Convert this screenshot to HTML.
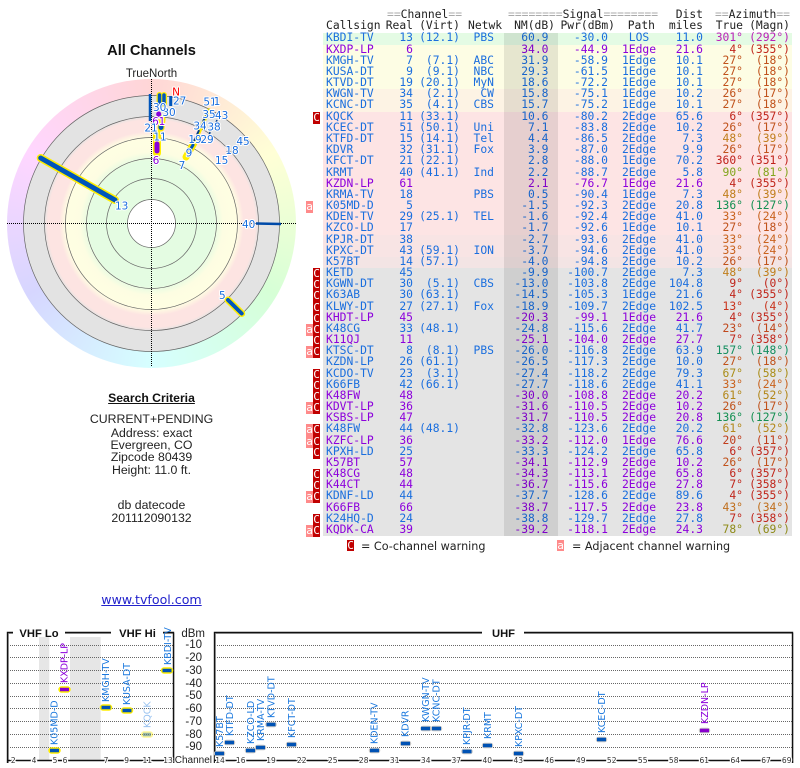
<!DOCTYPE html>
<html><head><meta charset="utf-8"><style>
html,body{margin:0;padding:0;background:#fff;width:800px;height:768px;overflow:hidden}
body{position:relative;font-family:"Liberation Sans",sans-serif;color:#222}
svg{position:absolute;left:0;top:0}
.c{position:absolute;left:0;width:303px;text-align:center;white-space:nowrap}
#ring{position:absolute;left:7px;top:79px;width:289px;height:289px;border-radius:50%;background:conic-gradient(hsl(0,100%,92%),hsl(30,100%,92%),hsl(60,100%,92%),hsl(90,100%,92%),hsl(120,100%,92%),hsl(150,100%,92%),hsl(180,100%,92%),hsl(210,100%,92%),hsl(240,100%,92%),hsl(270,100%,92%),hsl(300,100%,92%),hsl(330,100%,92%),hsl(360,100%,92%))}
.mono{font-family:"DejaVu Sans Mono",monospace;font-size:11.33px;line-height:12px}
.hd{position:absolute;top:0;left:0;width:800px;height:30px;color:#222}
.hd span{position:absolute;white-space:pre}
.hd em{font-style:normal;color:#aaa}
.r{position:absolute;left:323px;width:469px;height:11px;border-bottom:1px solid rgba(0,0,0,.17);color:#1a6ede}
.r.t{height:12px}
.r span{position:absolute;top:-2px;white-space:pre}
.r i{font-style:normal}
.P{color:#8c00dc}
.n{left:3px}.a{right:379px}.v{right:332px}.w{right:298px}.m{right:243.5px}.d{right:184px}
.h{left:286px;width:60px;text-align:center}.l{right:89px}.y{right:49px}.g{right:2px}
.bg{background:#e4fbe4}.by{background:#fdfde4}.bo{background:#fdf3e4}.bp{background:#fde4e4}.bq{background:#f8e4e4}.bs{background:#f3e4e4}.bk{background:#e4e4e4}
u{position:absolute;text-decoration:none;width:7px;height:12px;top:0;color:#fff;text-align:center;font:11px/11px "DejaVu Sans Mono",monospace}
u.C{left:-10px;background:#c00000}
u.A{left:-17px;background:#ff8a8a}
#nm{position:absolute;left:504px;top:33px;width:54px;height:503px;background:rgba(0,0,0,.09)}
a{color:#2222cc}
</style></head><body>
<div id="ring"></div>

<div class="c" style="top:43px;font-weight:bold;font-size:14.67px;line-height:17px;color:#111">All Channels</div>
<div class="c" style="top:68px;font-size:11.5px;line-height:13px">TrueNorth</div>

<svg width="800" height="768" viewBox="0 0 800 768">
<defs><radialGradient id="rg" gradientUnits="userSpaceOnUse" cx="151.5" cy="223.5" r="128">
<stop offset="0" stop-color="#e4fce2"/><stop offset=".49" stop-color="#e4fce2"/><stop offset=".56" stop-color="#fdfde2"/><stop offset=".67" stop-color="#fffee2"/><stop offset=".72" stop-color="#fde4e2"/><stop offset=".81" stop-color="#fde4e2"/><stop offset=".84" stop-color="#e3e3e3"/><stop offset="1" stop-color="#e3e3e3"/>
</radialGradient></defs>
<circle cx="151.5" cy="223.5" r="128" fill="url(#rg)" stroke="#666" stroke-width=".7"/>
<g fill="none" stroke="#666" stroke-width=".7">
<circle cx="151.5" cy="223.5" r="107"/><circle cx="151.5" cy="223.5" r="86"/><circle cx="151.5" cy="223.5" r="65"/><circle cx="151.5" cy="223.5" r="45"/></g>
<circle cx="151.5" cy="223.5" r="24" fill="#fff" stroke="#666" stroke-width=".7"/>
<g stroke="#000" stroke-width="1" stroke-dasharray="1 1"><line x1="7" y1="223.5" x2="296" y2="223.5"/><line x1="151.5" y1="79" x2="151.5" y2="367"/></g>
<g fill="none" stroke-linecap="round">
<g stroke="#ffee00"><path stroke-width="8" d="M40.7 158L115 200"/><path stroke-width="7" d="M228 300L241.7 313.5"/><path stroke-width="8" d="M157 134V153"/><path stroke-width="6" d="M159.5 95V103M164 95V104"/><path stroke-width="7" d="M162 119L161 128"/><path stroke-width="7" d="M186 157L194 143"/><path stroke-width="3.5" d="M197 137L209 110"/></g>
<g stroke="#0055bb"><path stroke-width="5" d="M40.7 158L115 200"/><path stroke-width="4" d="M228 300L241.7 313.5"/><path stroke-width="3.5" d="M159.5 95V103M164 95V104"/><path stroke-width="5" d="M161 126.5V127.5"/><path stroke-width="3" d="M190 150L193 145"/></g>
<path stroke="#8800dd" stroke-width="5" d="M157 144V151"/><path stroke="#8800dd" stroke-width="5" d="M158.7 114V114.2"/>
</g>
<g fill="none" stroke="#0055bb"><path stroke-width="2.5" d="M150 94V121"/><path stroke-width="3" d="M170.7 96V106"/><path stroke="#004aa8" stroke-width="2.5" d="M256 223.5L281 224"/><path stroke="#003e90" stroke-width="2" stroke-dasharray="5 2" d="M194 141L209 109"/><path stroke="#003e90" stroke-width="1.5" d="M217 120L215 125M210 132L209 136M239 140L237 143M229 150L227 152"/></g>
<g font-family="'DejaVu Sans',sans-serif" font-size="10.5" text-anchor="middle" fill="#1a6ede" stroke="#fff" stroke-width="2" paint-order="stroke" stroke-linejoin="round">
<text x="179.7" y="104.5">27</text><text x="169" y="116">30</text><text x="159.7" y="111">30</text>
<text x="155.5" y="125" fill="#8c00dc">6</text><text x="162" y="125" fill="#8c00dc">1</text>
<text x="151" y="131.5">21</text><text x="160" y="140.5">11</text><text x="156" y="164" fill="#8c00dc">6</text>
<text x="182" y="169">7</text><text x="189" y="156.5">9</text><text x="195" y="143">19</text><text x="207" y="143">29</text><text x="200" y="129.5">34</text><text x="209" y="118">35</text><text x="214" y="130.5">38</text><text x="221.7" y="119">43</text><text x="210" y="105.5">51</text><text x="217" y="105">1</text><text x="221.7" y="164">15</text><text x="232" y="154">18</text><text x="243" y="145">45</text><text x="121.7" y="209.5">13</text><text x="248.7" y="228">40</text><text x="222.3" y="299">5</text>
<text x="176" y="95.5" fill="#ff0000">N</text></g>

<!-- chart -->
<g fill="#e6e6e6"><rect x="39" y="637" width="10.3" height="123"/><rect x="70" y="637" width="30.7" height="123"/></g>
<g stroke="#666" stroke-width="1" stroke-dasharray="1 1">
<path d="M8 645.5H173M8 657.5H173M8 670.5H173M8 683.5H173M8 696.5H173M8 708.5H173M8 721.5H173M8 734.5H173M8 747.5H173"/>
<path d="M215 645.5H792M215 657.5H792M215 670.5H792M215 683.5H792M215 696.5H792M215 708.5H792M215 721.5H792M215 734.5H792M215 747.5H792"/></g>
<g fill="none" stroke="#aaa" stroke-width="1"><path d="M8.5 633.5H13M65 633.5H111M163 633.5H174V763M8.5 633.5V763M215.5 633.5H482M524 633.5H793V763M215.5 633.5V763"/></g>
<g fill="none" stroke="#111" stroke-width="1.4"><path d="M7.5 763V632.5H13M65 632.5H111M163 632.5H173.5V763M214.5 763V632.5H482M524 632.5H792.5V763"/><path d="M7.5 760.5H173.5M214.5 760.5H792.5"/></g>
<g font-family="'Liberation Sans',sans-serif" font-weight="bold" font-size="11.2" fill="#111" text-anchor="middle"><text x="39" y="637">VHF Lo</text><text x="137.5" y="637">VHF Hi</text><text x="503.5" y="637">UHF</text></g>
<g font-family="'Liberation Sans',sans-serif" font-size="11.5" fill="#222" text-anchor="end"><text x="205" y="637">dBm</text><text x="202" y="648">-10</text><text x="202" y="661">-20</text><text x="202" y="674">-30</text><text x="202" y="687">-40</text><text x="202" y="699">-50</text><text x="202" y="712">-60</text><text x="202" y="725">-70</text><text x="202" y="738">-80</text><text x="202" y="750">-90</text><text x="212" y="763" font-size="10">Channel</text></g>
<g font-family="'DejaVu Sans',sans-serif" font-size="7.5" fill="#333" text-anchor="middle" stroke="#fff" stroke-width="2.5" paint-order="stroke">
<text x="13.3" y="763">2</text><text x="34" y="763">4</text><text x="55" y="763">5</text><text x="65" y="763">6</text><text x="106" y="763">7</text><text x="126.7" y="763">9</text><text x="147.3" y="763">11</text><text x="168" y="763">13</text><text x="220" y="763">14</text><text x="240.7" y="763">16</text><text x="271" y="763">19</text><text x="301.7" y="763">22</text><text x="332.7" y="763">25</text><text x="363.7" y="763">28</text><text x="394.7" y="763">31</text><text x="425.7" y="763">34</text><text x="456.3" y="763">37</text><text x="487.3" y="763">40</text><text x="518.3" y="763">43</text><text x="549.3" y="763">46</text><text x="580.7" y="763">49</text><text x="611.7" y="763">52</text><text x="642.7" y="763">55</text><text x="673.7" y="763">58</text><text x="704.3" y="763">61</text><text x="735.3" y="763">64</text><text x="766" y="763">67</text><text x="786.7" y="763">69</text></g>
<!-- markers -->
<g fill="none">
<g stroke="#ffee00" stroke-width="6.5" stroke-linecap="round"><path d="M51.5 750.5H57.5M61.5 689.5H67.5M103 707.5H109M124 710.5H130M164 670.5H170"/><path opacity=".4" d="M144 734.5H150"/></g>
<g stroke="#c4c4c4" stroke-width="5.5" stroke-linecap="round"><path d="M216.5 753.5H222.5M226.5 742.5H232.5M247.5 750.5H253.5M257.5 747.5H263.5M268 724.5H274M288.5 744.5H294.5M371.5 750.5H377.5M402.5 743.5H408.5M423 728.5H429M433.5 728.5H439.5M464 751.5H470M484.5 745.5H490.5M515.5 753.5H521.5M598.5 739.5H604.5M701.5 730.5H707.5"/></g>
<g stroke="#0052b4" stroke-width="3.5"><path d="M50 750.5H59M101.5 707.5H110.5M122.5 710.5H131.5M162.5 670.5H171.5M215 753.5H224M225 742.5H234M246 750.5H255M256 747.5H265M266.5 724.5H275.5M287 744.5H296M370 750.5H379M401 743.5H410M421 728.5H430M432 728.5H441M462.5 751.5H471.5M483 745.5H492M514 753.5H523M597 739.5H606"/><path opacity=".4" d="M143 734.5H151"/></g>
<path stroke="#8800cc" stroke-width="3.5" d="M60 689.5H69M700 730.5H709"/>
</g>
<g font-family="'DejaVu Sans',sans-serif" font-size="9.5" fill="#1a78de">
<text transform="translate(57.5,745) rotate(-90)">K05MD-D</text>
<text transform="translate(67.5,683) rotate(-90)" fill="#8c00dc">KXDP-LP</text>
<text transform="translate(109,702) rotate(-90)">KMGH-TV</text>
<text transform="translate(130,705) rotate(-90)">KUSA-DT</text>
<text transform="translate(150.5,728) rotate(-90)" opacity=".45">KQCK</text>
<text transform="translate(171,665) rotate(-90)">KBDI-TV</text>
<text transform="translate(223,747) rotate(-90)">K57BT</text>
<text transform="translate(233,736) rotate(-90)">KTFD-DT</text>
<text transform="translate(254,744) rotate(-90)">KZCO-LD</text>
<text transform="translate(264,741) rotate(-90)">KRMA-TV</text>
<text transform="translate(274.5,718) rotate(-90)">KTVD-DT</text>
<text transform="translate(295,738) rotate(-90)">KFCT-DT</text>
<text transform="translate(377.5,744) rotate(-90)">KDEN-TV</text>
<text transform="translate(408.5,737) rotate(-90)">KDVR</text>
<text transform="translate(429,722) rotate(-90)">KWGN-TV</text>
<text transform="translate(439.5,722) rotate(-90)">KCNC-DT</text>
<text transform="translate(470,745) rotate(-90)">KPJR-DT</text>
<text transform="translate(491,739) rotate(-90)">KRMT</text>
<text transform="translate(522,747) rotate(-90)">KPXC-DT</text>
<text transform="translate(605,733) rotate(-90)">KCEC-DT</text>
<text transform="translate(708,724) rotate(-90)" fill="#8c00dc">KZDN-LP</text>
</g>
</svg>

<div class="c" style="top:391px;font-weight:bold;font-size:12.2px;line-height:14px;color:#111"><span style="text-decoration:underline">Search Criteria</span></div>
<div class="c" style="top:413px;font-size:12.3px;line-height:13px">CURRENT+PENDING</div>
<div class="c" style="top:427px;font-size:12.3px;line-height:13px">Address: exact</div>
<div class="c" style="top:439px;font-size:12.3px;line-height:13px">Evergreen, CO</div>
<div class="c" style="top:451px;font-size:12.3px;line-height:13px">Zipcode 80439</div>
<div class="c" style="top:464px;font-size:12.3px;line-height:13px">Height: 11.0 ft.</div>
<div class="c" style="top:499px;font-size:12.3px;line-height:13px">db datecode</div>
<div class="c" style="top:512px;font-size:12.3px;line-height:13px">201112090132</div>
<div class="c" style="top:592px;font-family:'DejaVu Sans',sans-serif;font-size:12.6px;line-height:15px"><a href="#">www.tvfool.com</a></div>

<div class="hd mono">
<span style="left:387px;top:8px"><em>==</em>Channel<em>==</em></span>
<span style="left:508px;top:8px"><em>========</em>Signal<em>========</em></span>
<span style="right:97px;top:8px">Dist</span>
<span style="right:10px;top:8px"><em>==</em>Azimuth<em>==</em></span>
<span style="left:326px;top:19px">Callsign</span>
<span style="right:387px;top:19px">Real</span>
<span style="right:340px;top:19px">(Virt)</span>
<span style="left:468px;top:19px">Netwk</span>
<span style="right:245px;top:19px">NM(dB)</span>
<span style="right:185px;top:19px">Pwr(dBm)</span>
<span style="right:145px;top:19px">Path</span>
<span style="right:97px;top:19px">miles</span>
<span style="right:57px;top:19px">True</span>
<span style="right:10px;top:19px">(Magn)</span>
</div>

<div class="mono">
<div class="r t bg" style="top:33px"><span class=n>KBDI-TV</span><span class=a>13</span><span class=v>(12.1)</span><span class=w>PBS</span><span class=m>60.9</span><span class=d>-30.0</span><span class=h>LOS</span><span class=l>11.0</span><i style="color:hsl(301,70%,43%)"><span class=y>301°</span><span class=g>(292°)</span></i></div>
<div class="r by P" style="top:45px"><span class=n>KXDP-LP</span><span class=a>6</span><span class=m>34.0</span><span class=d>-44.9</span><span class=h>1Edge</span><span class=l>21.6</span><i style="color:hsl(4,75%,43%)"><span class=y>4°</span><span class=g>(355°)</span></i></div>
<div class="r by" style="top:56px"><span class=n>KMGH-TV</span><span class=a>7</span><span class=v>(7.1)</span><span class=w>ABC</span><span class=m>31.9</span><span class=d>-58.9</span><span class=h>1Edge</span><span class=l>10.1</span><i style="color:hsl(20,75%,43%)"><span class=y>27°</span><span class=g>(18°)</span></i></div>
<div class="r by" style="top:67px"><span class=n>KUSA-DT</span><span class=a>9</span><span class=v>(9.1)</span><span class=w>NBC</span><span class=m>29.3</span><span class=d>-61.5</span><span class=h>1Edge</span><span class=l>10.1</span><i style="color:hsl(20,75%,43%)"><span class=y>27°</span><span class=g>(18°)</span></i></div>
<div class="r by" style="top:78px"><span class=n>KTVD-DT</span><span class=a>19</span><span class=v>(20.1)</span><span class=w>MyN</span><span class=m>18.6</span><span class=d>-72.2</span><span class=h>1Edge</span><span class=l>10.1</span><i style="color:hsl(20,75%,43%)"><span class=y>27°</span><span class=g>(18°)</span></i></div>
<div class="r bo" style="top:89px"><span class=n>KWGN-TV</span><span class=a>34</span><span class=v>(2.1)</span><span class=w>CW</span><span class=m>15.8</span><span class=d>-75.1</span><span class=h>1Edge</span><span class=l>10.2</span><i style="color:hsl(20,75%,43%)"><span class=y>26°</span><span class=g>(17°)</span></i></div>
<div class="r t bo" style="top:100px"><span class=n>KCNC-DT</span><span class=a>35</span><span class=v>(4.1)</span><span class=w>CBS</span><span class=m>15.7</span><span class=d>-75.2</span><span class=h>1Edge</span><span class=l>10.1</span><i style="color:hsl(20,75%,43%)"><span class=y>27°</span><span class=g>(18°)</span></i></div>
<div class="r bp" style="top:112px"><u class=C>C</u><span class=n>KQCK</span><span class=a>11</span><span class=v>(33.1)</span><span class=m>10.6</span><span class=d>-80.2</span><span class=h>2Edge</span><span class=l>65.6</span><i style="color:hsl(4,75%,43%)"><span class=y>6°</span><span class=g>(357°)</span></i></div>
<div class="r bp" style="top:123px"><span class=n>KCEC-DT</span><span class=a>51</span><span class=v>(50.1)</span><span class=w>Uni</span><span class=m>7.1</span><span class=d>-83.8</span><span class=h>2Edge</span><span class=l>10.2</span><i style="color:hsl(20,75%,43%)"><span class=y>26°</span><span class=g>(17°)</span></i></div>
<div class="r bp" style="top:134px"><span class=n>KTFD-DT</span><span class=a>15</span><span class=v>(14.1)</span><span class=w>Tel</span><span class=m>4.4</span><span class=d>-86.5</span><span class=h>2Edge</span><span class=l>7.3</span><i style="color:hsl(36,75%,43%)"><span class=y>48°</span><span class=g>(39°)</span></i></div>
<div class="r bp" style="top:145px"><span class=n>KDVR</span><span class=a>32</span><span class=v>(31.1)</span><span class=w>Fox</span><span class=m>3.9</span><span class=d>-87.0</span><span class=h>2Edge</span><span class=l>9.9</span><i style="color:hsl(20,75%,43%)"><span class=y>26°</span><span class=g>(17°)</span></i></div>
<div class="r t bp" style="top:156px"><span class=n>KFCT-DT</span><span class=a>21</span><span class=v>(22.1)</span><span class=m>2.8</span><span class=d>-88.0</span><span class=h>1Edge</span><span class=l>70.2</span><i style="color:hsl(2,75%,43%)"><span class=y>360°</span><span class=g>(351°)</span></i></div>
<div class="r bp" style="top:168px"><span class=n>KRMT</span><span class=a>40</span><span class=v>(41.1)</span><span class=w>Ind</span><span class=m>2.2</span><span class=d>-88.7</span><span class=h>2Edge</span><span class=l>5.8</span><i style="color:hsl(75,70%,38%)"><span class=y>90°</span><span class=g>(81°)</span></i></div>
<div class="r bp P" style="top:179px"><span class=n>KZDN-LP</span><span class=a>61</span><span class=m>2.1</span><span class=d>-76.7</span><span class=h>1Edge</span><span class=l>21.6</span><i style="color:hsl(4,75%,43%)"><span class=y>4°</span><span class=g>(355°)</span></i></div>
<div class="r bp" style="top:190px"><span class=n>KRMA-TV</span><span class=a>18</span><span class=w>PBS</span><span class=m>0.5</span><span class=d>-90.4</span><span class=h>1Edge</span><span class=l>7.3</span><i style="color:hsl(36,75%,43%)"><span class=y>48°</span><span class=g>(39°)</span></i></div>
<div class="r bp" style="top:201px"><u class=A>a</u><span class=n>K05MD-D</span><span class=a>5</span><span class=m>-1.5</span><span class=d>-92.3</span><span class=h>2Edge</span><span class=l>20.8</span><i style="color:hsl(150,75%,32%)"><span class=y>136°</span><span class=g>(127°)</span></i></div>
<div class="r bp" style="top:212px"><span class=n>KDEN-TV</span><span class=a>29</span><span class=v>(25.1)</span><span class=w>TEL</span><span class=m>-1.6</span><span class=d>-92.4</span><span class=h>2Edge</span><span class=l>41.0</span><i style="color:hsl(24,75%,45%)"><span class=y>33°</span><span class=g>(24°)</span></i></div>
<div class="r t bp" style="top:223px"><span class=n>KZCO-LD</span><span class=a>17</span><span class=m>-1.7</span><span class=d>-92.6</span><span class=h>1Edge</span><span class=l>10.1</span><i style="color:hsl(20,75%,43%)"><span class=y>27°</span><span class=g>(18°)</span></i></div>
<div class="r bq" style="top:235px"><span class=n>KPJR-DT</span><span class=a>38</span><span class=m>-2.7</span><span class=d>-93.6</span><span class=h>2Edge</span><span class=l>41.0</span><i style="color:hsl(24,75%,45%)"><span class=y>33°</span><span class=g>(24°)</span></i></div>
<div class="r bq" style="top:246px"><span class=n>KPXC-DT</span><span class=a>43</span><span class=v>(59.1)</span><span class=w>ION</span><span class=m>-3.7</span><span class=d>-94.6</span><span class=h>2Edge</span><span class=l>41.0</span><i style="color:hsl(24,75%,45%)"><span class=y>33°</span><span class=g>(24°)</span></i></div>
<div class="r bs" style="top:257px"><span class=n>K57BT</span><span class=a>14</span><span class=v>(57.1)</span><span class=m>-4.0</span><span class=d>-94.8</span><span class=h>2Edge</span><span class=l>10.2</span><i style="color:hsl(20,75%,43%)"><span class=y>26°</span><span class=g>(17°)</span></i></div>
<div class="r bk" style="top:268px"><u class=C>C</u><span class=n>KETD</span><span class=a>45</span><span class=m>-9.9</span><span class=d>-100.7</span><span class=h>2Edge</span><span class=l>7.3</span><i style="color:hsl(36,75%,43%)"><span class=y>48°</span><span class=g>(39°)</span></i></div>
<div class="r bk" style="top:279px"><u class=C>C</u><span class=n>KGWN-DT</span><span class=a>30</span><span class=v>(5.1)</span><span class=w>CBS</span><span class=m>-13.0</span><span class=d>-103.8</span><span class=h>2Edge</span><span class=l>104.8</span><i style="color:hsl(4,75%,43%)"><span class=y>9°</span><span class=g>(0°)</span></i></div>
<div class="r t bk" style="top:290px"><u class=C>C</u><span class=n>K63AB</span><span class=a>30</span><span class=v>(63.1)</span><span class=m>-14.5</span><span class=d>-105.3</span><span class=h>1Edge</span><span class=l>21.6</span><i style="color:hsl(4,75%,43%)"><span class=y>4°</span><span class=g>(355°)</span></i></div>
<div class="r bk" style="top:302px"><u class=C>C</u><span class=n>KLWY-DT</span><span class=a>27</span><span class=v>(27.1)</span><span class=w>Fox</span><span class=m>-18.9</span><span class=d>-109.7</span><span class=h>2Edge</span><span class=l>102.5</span><i style="color:hsl(8,75%,45%)"><span class=y>13°</span><span class=g>(4°)</span></i></div>
<div class="r bk P" style="top:313px"><u class=C>C</u><span class=n>KHDT-LP</span><span class=a>45</span><span class=m>-20.3</span><span class=d>-99.1</span><span class=h>1Edge</span><span class=l>21.6</span><i style="color:hsl(4,75%,43%)"><span class=y>4°</span><span class=g>(355°)</span></i></div>
<div class="r bk" style="top:324px"><u class=A>a</u><u class=C>C</u><span class=n>K48CG</span><span class=a>33</span><span class=v>(48.1)</span><span class=m>-24.8</span><span class=d>-115.6</span><span class=h>2Edge</span><span class=l>41.7</span><i style="color:hsl(16,75%,43%)"><span class=y>23°</span><span class=g>(14°)</span></i></div>
<div class="r bk P" style="top:335px"><u class=C>C</u><span class=n>K11QJ</span><span class=a>11</span><span class=m>-25.1</span><span class=d>-104.0</span><span class=h>2Edge</span><span class=l>27.7</span><i style="color:hsl(4,75%,43%)"><span class=y>7°</span><span class=g>(358°)</span></i></div>
<div class="r bk" style="top:346px"><u class=A>a</u><u class=C>C</u><span class=n>KTSC-DT</span><span class=a>8</span><span class=v>(8.1)</span><span class=w>PBS</span><span class=m>-26.0</span><span class=d>-116.8</span><span class=h>2Edge</span><span class=l>63.9</span><i style="color:hsl(157,75%,32%)"><span class=y>157°</span><span class=g>(148°)</span></i></div>
<div class="r t bk" style="top:357px"><span class=n>KZDN-LP</span><span class=a>26</span><span class=v>(61.1)</span><span class=m>-26.5</span><span class=d>-117.3</span><span class=h>2Edge</span><span class=l>10.0</span><i style="color:hsl(20,75%,43%)"><span class=y>27°</span><span class=g>(18°)</span></i></div>
<div class="r bk" style="top:369px"><u class=C>C</u><span class=n>KCDO-TV</span><span class=a>23</span><span class=v>(3.1)</span><span class=m>-27.4</span><span class=d>-118.2</span><span class=h>2Edge</span><span class=l>79.3</span><i style="color:hsl(48,75%,38%)"><span class=y>67°</span><span class=g>(58°)</span></i></div>
<div class="r bk" style="top:380px"><u class=C>C</u><span class=n>K66FB</span><span class=a>42</span><span class=v>(66.1)</span><span class=m>-27.7</span><span class=d>-118.6</span><span class=h>2Edge</span><span class=l>41.1</span><i style="color:hsl(24,75%,45%)"><span class=y>33°</span><span class=g>(24°)</span></i></div>
<div class="r bk P" style="top:391px"><u class=C>C</u><span class=n>K48FW</span><span class=a>48</span><span class=m>-30.0</span><span class=d>-108.8</span><span class=h>2Edge</span><span class=l>20.2</span><i style="color:hsl(43,75%,40%)"><span class=y>61°</span><span class=g>(52°)</span></i></div>
<div class="r bk P" style="top:402px"><u class=A>a</u><u class=C>C</u><span class=n>KDVT-LP</span><span class=a>36</span><span class=m>-31.6</span><span class=d>-110.5</span><span class=h>2Edge</span><span class=l>10.2</span><i style="color:hsl(20,75%,43%)"><span class=y>26°</span><span class=g>(17°)</span></i></div>
<div class="r bk P" style="top:413px"><span class=n>KSBS-LP</span><span class=a>47</span><span class=m>-31.7</span><span class=d>-110.5</span><span class=h>2Edge</span><span class=l>20.8</span><i style="color:hsl(150,75%,32%)"><span class=y>136°</span><span class=g>(127°)</span></i></div>
<div class="r t bk" style="top:424px"><u class=A>a</u><u class=C>C</u><span class=n>K48FW</span><span class=a>44</span><span class=v>(48.1)</span><span class=m>-32.8</span><span class=d>-123.6</span><span class=h>2Edge</span><span class=l>20.2</span><i style="color:hsl(43,75%,40%)"><span class=y>61°</span><span class=g>(52°)</span></i></div>
<div class="r bk P" style="top:436px"><u class=A>a</u><u class=C>C</u><span class=n>KZFC-LP</span><span class=a>36</span><span class=m>-33.2</span><span class=d>-112.0</span><span class=h>1Edge</span><span class=l>76.6</span><i style="color:hsl(12,75%,43%)"><span class=y>20°</span><span class=g>(11°)</span></i></div>
<div class="r bk" style="top:447px"><u class=C>C</u><span class=n>KPXH-LD</span><span class=a>25</span><span class=m>-33.3</span><span class=d>-124.2</span><span class=h>2Edge</span><span class=l>65.8</span><i style="color:hsl(4,75%,43%)"><span class=y>6°</span><span class=g>(357°)</span></i></div>
<div class="r bk P" style="top:458px"><span class=n>K57BT</span><span class=a>57</span><span class=m>-34.1</span><span class=d>-112.9</span><span class=h>2Edge</span><span class=l>10.2</span><i style="color:hsl(20,75%,43%)"><span class=y>26°</span><span class=g>(17°)</span></i></div>
<div class="r bk P" style="top:469px"><u class=C>C</u><span class=n>K48CG</span><span class=a>48</span><span class=m>-34.3</span><span class=d>-113.1</span><span class=h>2Edge</span><span class=l>65.8</span><i style="color:hsl(4,75%,43%)"><span class=y>6°</span><span class=g>(357°)</span></i></div>
<div class="r bk P" style="top:480px"><u class=C>C</u><span class=n>K44CT</span><span class=a>44</span><span class=m>-36.7</span><span class=d>-115.6</span><span class=h>2Edge</span><span class=l>27.8</span><i style="color:hsl(4,75%,43%)"><span class=y>7°</span><span class=g>(358°)</span></i></div>
<div class="r t bk" style="top:491px"><u class=A>a</u><u class=C>C</u><span class=n>KDNF-LD</span><span class=a>44</span><span class=m>-37.7</span><span class=d>-128.6</span><span class=h>2Edge</span><span class=l>89.6</span><i style="color:hsl(4,75%,43%)"><span class=y>4°</span><span class=g>(355°)</span></i></div>
<div class="r bk P" style="top:503px"><span class=n>K66FB</span><span class=a>66</span><span class=m>-38.7</span><span class=d>-117.5</span><span class=h>2Edge</span><span class=l>23.8</span><i style="color:hsl(30,75%,43%)"><span class=y>43°</span><span class=g>(34°)</span></i></div>
<div class="r bk" style="top:514px"><u class=C>C</u><span class=n>K24HQ-D</span><span class=a>24</span><span class=m>-38.8</span><span class=d>-129.7</span><span class=h>2Edge</span><span class=l>27.8</span><i style="color:hsl(4,75%,43%)"><span class=y>7°</span><span class=g>(358°)</span></i></div>
<div class="r bk P" style="top:525px;border-bottom:0"><u class=A>a</u><u class=C>C</u><span class=n>KQDK-CA</span><span class=a>39</span><span class=m>-39.2</span><span class=d>-118.1</span><span class=h>2Edge</span><span class=l>24.3</span><i style="color:hsl(58,70%,33%)"><span class=y>78°</span><span class=g>(69°)</span></i></div>
</div>
<div id="nm"></div>

<div style="position:absolute;left:347px;top:540px;width:7px;height:11px;background:#c00000;color:#fff;font:11px/11px 'DejaVu Sans Mono',monospace;text-align:center">C</div>
<div style="position:absolute;left:361px;top:540px;font:11.2px/14px 'DejaVu Sans',sans-serif;color:#222;white-space:nowrap">= Co-channel warning</div>
<div style="position:absolute;left:557px;top:540px;width:7px;height:11px;background:#ff8a8a;color:#fff;font:11px/11px 'DejaVu Sans Mono',monospace;text-align:center">a</div>
<div style="position:absolute;left:572px;top:540px;font:11.2px/14px 'DejaVu Sans',sans-serif;color:#222;white-space:nowrap">= Adjacent channel warning</div>
</body></html>
